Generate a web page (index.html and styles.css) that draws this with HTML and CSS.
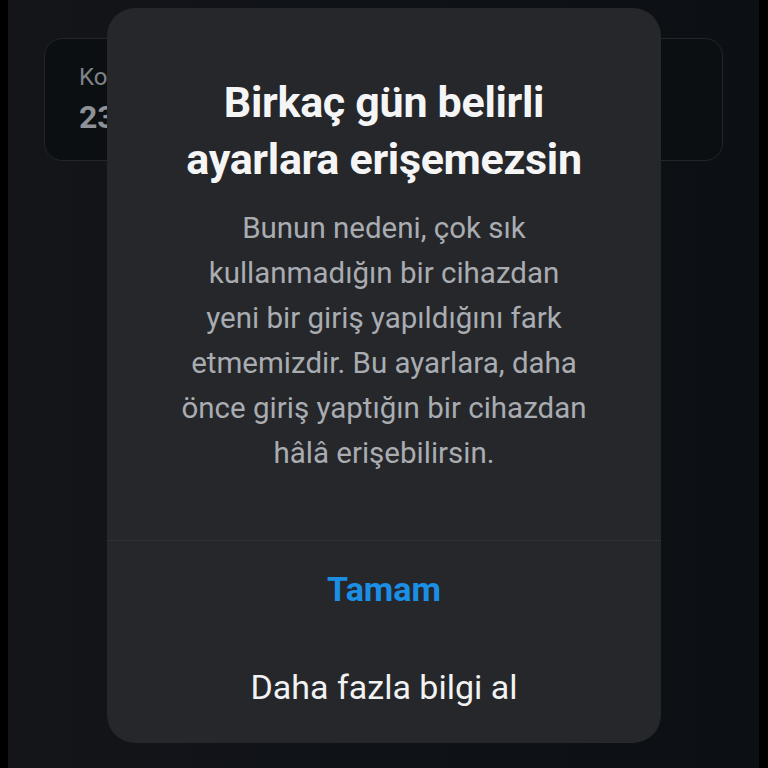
FILE: index.html
```html
<!DOCTYPE html>
<html lang="tr">
<head>
  <meta charset="UTF-8">
  <meta name="viewport" content="width=device-width, initial-scale=1.0">
  <title>Ayarlar</title>
  <link rel="stylesheet" href="styles.css">
</head>
<body>
  <div class="screen">
    <div class="info-card">
      <div class="info-label">Konum</div>
      <div class="info-value">23 Eylül</div>
    </div>

    <div class="dialog">
      <div class="dialog-body">
        <h1 class="dialog-title">Birkaç gün belirli<br>ayarlara erişemezsin</h1>
        <p class="dialog-text">
          Bunun nedeni, çok sık<br>
          kullanmadığın bir cihazdan<br>
          yeni bir giriş yapıldığını fark<br>
          etmemizdir. Bu ayarlara, daha<br>
          önce giriş yaptığın bir cihazdan<br>
          hâlâ erişebilirsin.
        </p>
      </div>
      <div class="dialog-actions">
        <button class="action primary">Tamam</button>
        <button class="action">Daha fazla bilgi al</button>
      </div>
    </div>
  </div>
</body>
</html>
```

FILE: styles.css
```css
* {
  margin: 0;
  padding: 0;
  box-sizing: border-box;
  font-family: 'Roboto', 'Noto Sans', sans-serif;
}

body {
  background: #000;
  height: 768px;
  overflow: hidden;
}

.screen {
  position: relative;
  margin: 0 9px 0 8px;
  height: 768px;
  background: linear-gradient(90deg, #131519 0%, #0f1217 50%, #0c1014 100%);
  padding-top: 38px;
}

.info-card {
  margin-left: 36px;
  width: 679px;
  height: 123px;
  border: 1.5px solid #22262b;
  border-radius: 18px;
  background: #0c0f12;
  padding: 23px 0 0 34px;
}

.info-label {
  font-size: 24px;
  color: #7f8287;
  line-height: 30px;
}

.info-value {
  font-size: 32px;
  font-weight: 700;
  color: #8e9196;
  line-height: 40px;
  margin-top: 5px;
}

/* modal over the page */
.dialog {
  position: absolute;
  left: 99px;
  top: 8px;
  width: 554px;
  height: 735px;
  background: #25272b;
  border-radius: 28px;
  display: flex;
  flex-direction: column;
}

.dialog-body {
  padding: 66px 20px 0;
  text-align: center;
  height: 533px;
  border-bottom: 1px solid #2d3034;
}

.dialog-title {
  font-size: 43px;
  font-weight: 700;
  line-height: 57px;
  color: #f5f5f6;
  letter-spacing: -0.3px;
}

.dialog-text {
  margin-top: 18px;
  font-size: 29.5px;
  line-height: 45px;
  color: #a9acb1;
}

.dialog-actions {
  display: flex;
  flex-direction: column;
}

.action {
  background: none;
  border: none;
  height: 100px;
  font-size: 34px;
  color: #f2f2f3;
  cursor: pointer;
}

.action.primary {
  height: 96px;
  color: #1b8fe6;
  font-weight: 700;
}
```
